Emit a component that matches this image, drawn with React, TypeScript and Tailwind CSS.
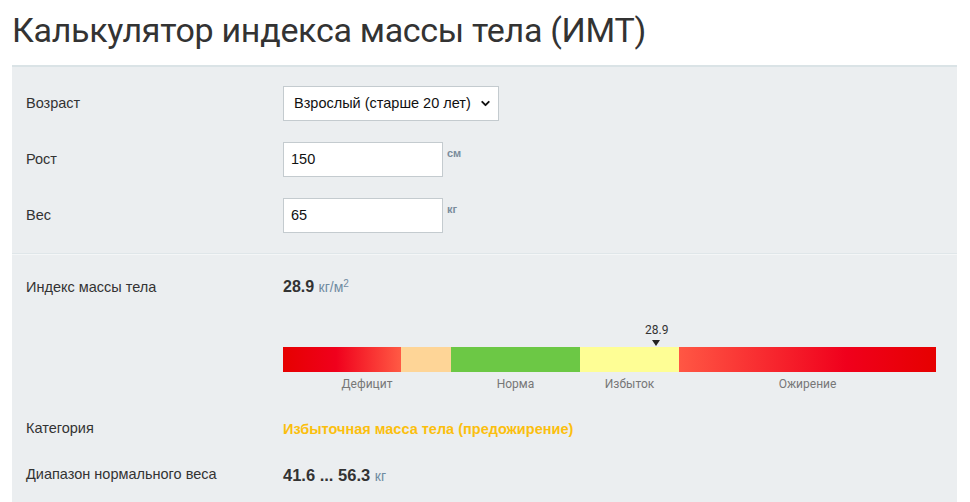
import { ChevronDown } from 'lucide-react';

const sans = "font-['Liberation_Sans',Arial,sans-serif]";

function Row({ label, children, className = '' }: { label: string; children: React.ReactNode; className?: string }) {
  return (
    <div className={`flex items-center ${className}`}>
      <div className="w-[257px] shrink-0 text-[14.5px] text-[#333]">{label}</div>
      <div className="flex-1">{children}</div>
    </div>
  );
}

function NumberField({ value, unit }: { value: string; unit: string }) {
  return (
    <div className="flex items-start">
      <div className="w-[160px] h-[35px] bg-white border border-[#c4cbcf] flex items-center px-[7px] text-[14.5px] text-[#111]">
        {value}
      </div>
      <span className="ml-[4px] mt-[3px] text-[11px] font-bold text-[#7a8c9c]">{unit}</span>
    </div>
  );
}

const segments = [
  { w: 118, cls: 'bg-[linear-gradient(to_right,#e60000,#f0001c_45%,#ff5a44)]' },
  { w: 50, cls: 'bg-[#fed597]' },
  { w: 129, cls: 'bg-[#6cc845]' },
  { w: 99, cls: 'bg-[#fefe95]' },
  { w: 257, cls: 'bg-[linear-gradient(to_right,#ff5744,#f0001c_65%,#e60000)]' },
];

// "Дефицит" spans both the red and the peach parts
const barLabels = [
  { w: 168, t: 'Дефицит' },
  { w: 129, t: 'Норма' },
  { w: 99, t: 'Избыток' },
  { w: 257, t: 'Ожирение' },
];

export default function App() {
  return (
    <div className={`w-[970px] h-[502px] bg-white overflow-hidden ${sans}`}>
      <h1 className="font-['Roboto',sans-serif] text-[34px] leading-none text-[#333] pl-[12px] pt-[13px] h-[65px] tracking-[-0.3px]">
        Калькулятор индекса массы тела (ИМТ)
      </h1>
      <div className="ml-[12px] w-[945px] bg-[#ebeef0] border-t-2 border-[#dae3e6]">
        <div className="pl-[14px] pt-[19px] pb-[20px] flex flex-col gap-[21px]">
          <Row label="Возраст">
            <div className="w-[216px] h-[35px] bg-white border border-[#c4cbcf] flex items-center justify-between pl-[10px] pr-[6px] text-[14.5px] text-[#111]">
              <span>Взрослый (старше 20 лет)</span>
              <ChevronDown size={13} strokeWidth={3.5} className="text-[#111]" />
            </div>
          </Row>
          <Row label="Рост">
            <NumberField value="150" unit="см" />
          </Row>
          <Row label="Вес">
            <NumberField value="65" unit="кг" />
          </Row>
        </div>
        <div className="h-[2px] bg-[#dfe6e9] border-b border-[#f4f6f7]" />
        <div className="pl-[14px] pt-[22px] pb-[28px]">
          <Row label="Индекс массы тела" className="items-start">
            <div className="text-[16px] text-[#333] leading-[20px]">
              <b>28.9</b>{' '}
              <span className="text-[14px] text-[#6f8ba1]">
                кг/м<sup className="text-[10px]">2</sup>
              </span>
            </div>
          </Row>
          <div className="ml-[257px] mt-[21px] w-[653px] font-['Roboto',sans-serif]">
            <div className="relative h-[27px]">
              <div className="absolute left-[362px] top-[1px] text-[12px] text-[#333]">28.9</div>
              <div className="absolute left-[369px] top-[20px] w-0 h-0 border-l-[4px] border-r-[4px] border-t-[6px] border-l-transparent border-r-transparent border-t-[#222]" />
            </div>
            <div className="flex h-[25px]">
              {segments.map((s, i) => (
                <div key={i} className={s.cls} style={{ width: s.w }} />
              ))}
            </div>
            <div className="flex mt-[3px] text-[12px] text-[#777]">
              {barLabels.map((l, i) => (
                <div key={i} className="text-center" style={{ width: l.w }}>
                  {l.t}
                </div>
              ))}
            </div>
          </div>
          <Row label="Категория" className="mt-[24px]">
            <span className="text-[14.5px] font-bold text-[#fbbf0e]">Избыточная масса тела (предожирение)</span>
          </Row>
          <Row label="Диапазон нормального веса" className="mt-[22px]">
            <span className="text-[16.5px] text-[#333]">
              <b>41.6 ... 56.3</b> <span className="text-[14px] text-[#6f8ba1]">кг</span>
            </span>
          </Row>
        </div>
      </div>
    </div>
  );
}
